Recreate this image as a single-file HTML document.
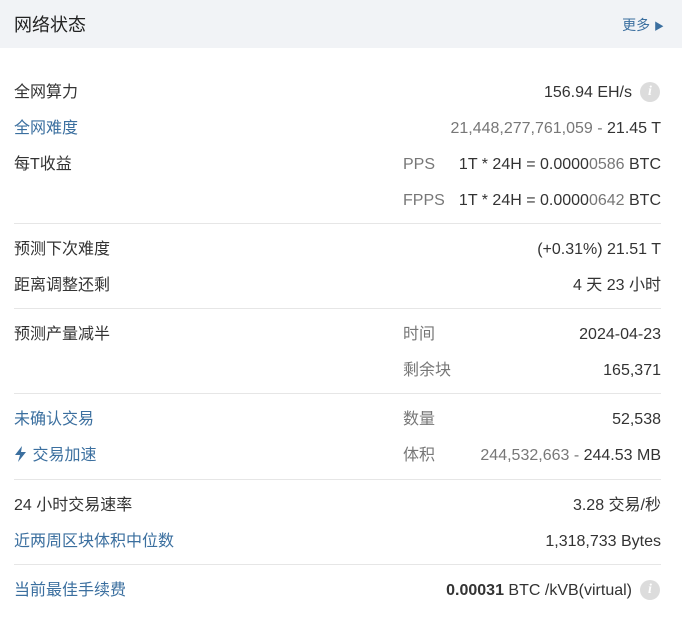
<!DOCTYPE html>
<html><head><meta charset="utf-8"><style>
body{margin:0;width:682px;height:629px;background:#fff;font-family:"Liberation Sans","Noto Sans CJK SC",sans-serif;font-size:16px;color:#333;position:relative;overflow:hidden}
.hd{position:absolute;left:0;top:0;width:682px;height:48px;background:#f1f3f6}
.t{position:absolute;left:14px;top:11px;font-size:18px;color:#222}
.more{position:absolute;right:18px;top:15px;font-size:14px;color:#3b6f9f}
.r{position:absolute;line-height:20px;white-space:nowrap;margin-top:2px}
.l{left:14px}
.v{right:21px}
.vi{right:50px}
.m{left:403px;color:#777}
.b{color:#3b6f9f}
.g{color:#777}
.hr{position:absolute;left:14px;width:647px;height:1px;background:#e6e6e6}
.i{position:absolute;left:640px;width:20px;height:20px;margin-top:1px;border-radius:50%;background:#dcdcdc;color:#fff;font:italic bold 14px "Liberation Serif",serif;text-align:center;line-height:20px}
</style></head><body>
<div class="hd"><div class="t">网络状态</div><div class="more">更多 <span style="font-size:10px">▶</span></div></div>

<div class="r l" style="top:81px">全网算力</div>
<div class="r vi" style="top:81px">156.94 EH/s</div>
<div class="i" style="top:81px">i</div>

<div class="r l b" style="top:117px">全网难度</div>
<div class="r v" style="top:117px"><span class="g">21,448,277,761,059 - </span>21.45 T</div>

<div class="r l" style="top:153px">每T收益</div>
<div class="r m" style="top:153px">PPS</div>
<div class="r v" style="top:153px">1T * 24H = 0.0000<span class="g">0586</span> BTC</div>
<div class="r m" style="top:189px">FPPS</div>
<div class="r v" style="top:189px">1T * 24H = 0.0000<span class="g">0642</span> BTC</div>

<div class="hr" style="top:223px"></div>

<div class="r l" style="top:238px">预测下次难度</div>
<div class="r v" style="top:238px">(+0.31%) 21.51 T</div>
<div class="r l" style="top:274px">距离调整还剩</div>
<div class="r v" style="top:274px">4 天 23 小时</div>

<div class="hr" style="top:308px"></div>

<div class="r l" style="top:323px">预测产量减半</div>
<div class="r m" style="top:323px">时间</div>
<div class="r v" style="top:323px">2024-04-23</div>
<div class="r m" style="top:359px">剩余块</div>
<div class="r v" style="top:359px">165,371</div>

<div class="hr" style="top:393px"></div>

<div class="r l b" style="top:408px">未确认交易</div>
<div class="r m" style="top:408px">数量</div>
<div class="r v" style="top:408px">52,538</div>
<div class="r l b" style="top:444px"><svg width="14" height="16" viewBox="0 0 14 16" style="vertical-align:-2px"><path d="M8 0L1 9h5l-2 7 8-10H7z" fill="#3b6f9f"/></svg> 交易加速</div>
<div class="r m" style="top:444px">体积</div>
<div class="r v" style="top:444px"><span class="g">244,532,663 - </span>244.53 MB</div>

<div class="hr" style="top:479px"></div>

<div class="r l" style="top:494px">24 小时交易速率</div>
<div class="r v" style="top:494px">3.28 交易/秒</div>
<div class="r l b" style="top:530px">近两周区块体积中位数</div>
<div class="r v" style="top:530px">1,318,733 Bytes</div>

<div class="hr" style="top:564px"></div>

<div class="r l b" style="top:579px">当前最佳手续费</div>
<div class="r vi" style="top:579px"><b>0.00031</b> BTC /kVB(virtual)</div>
<div class="i" style="top:579px">i</div>
</body></html>
